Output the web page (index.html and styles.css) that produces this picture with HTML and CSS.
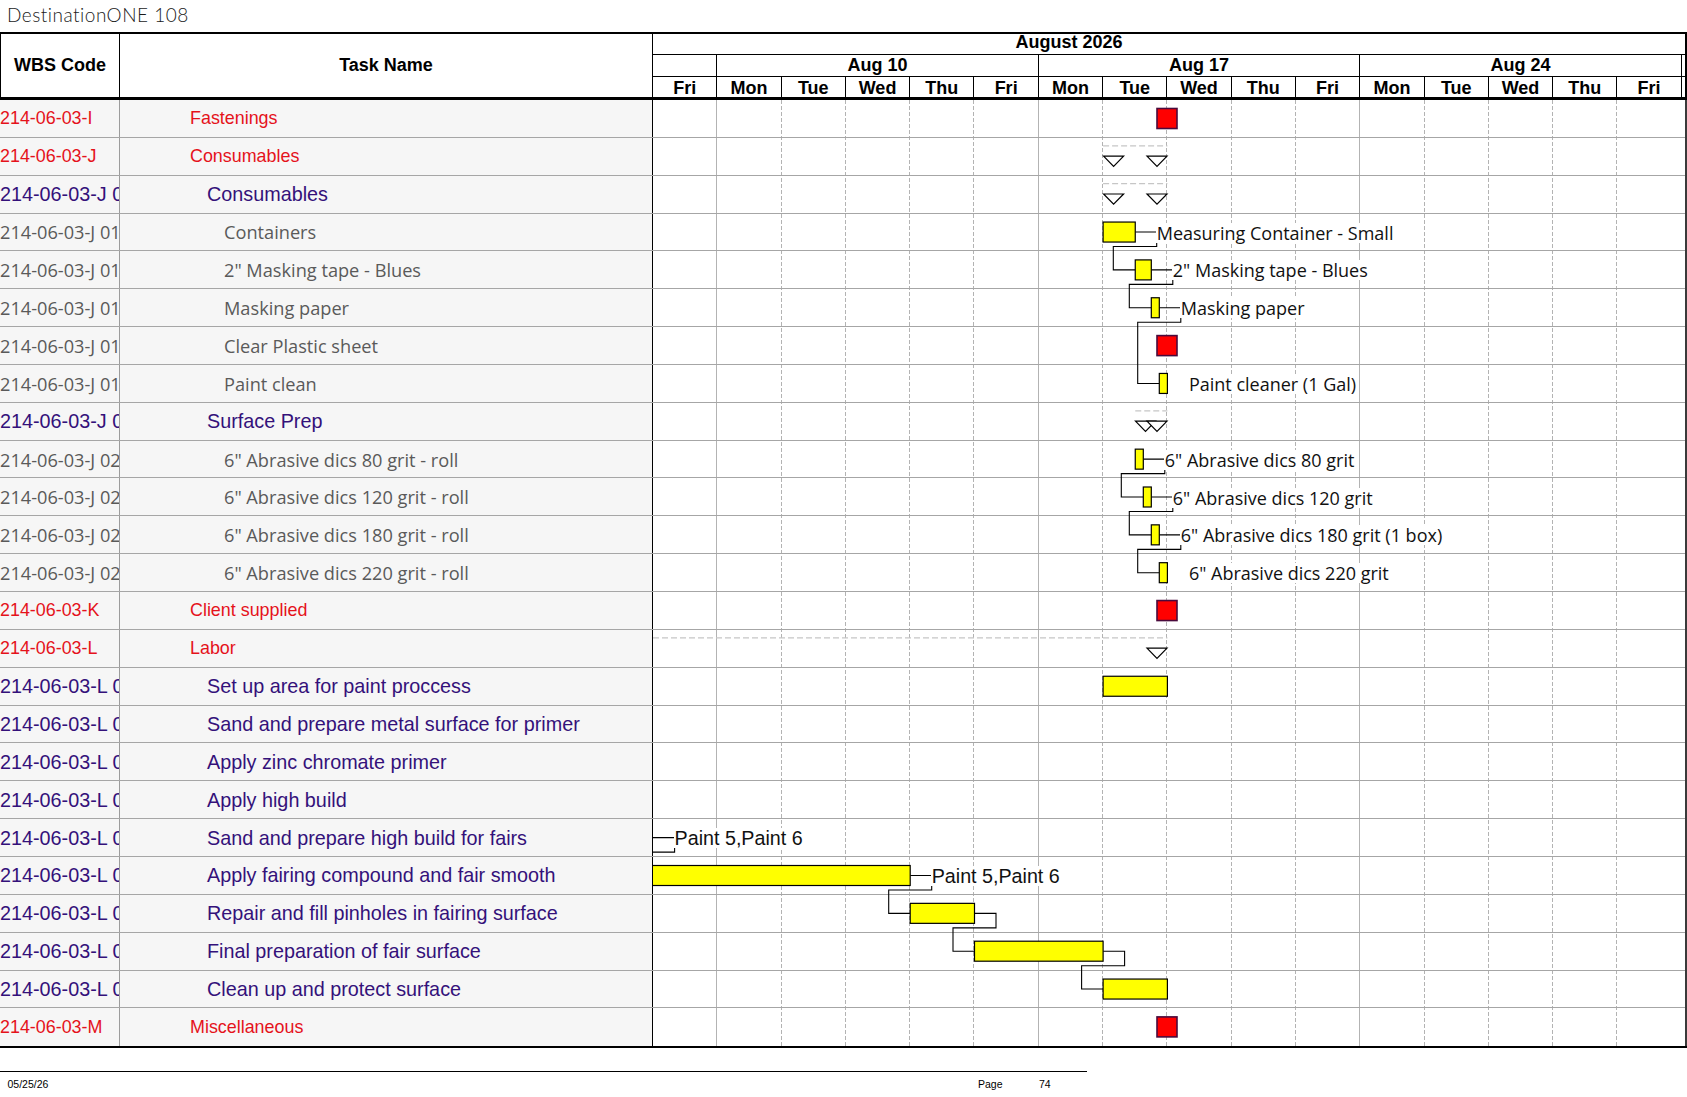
FILE: index.html
```html
<!DOCTYPE html>
<html lang="en">
<head>
<meta charset="utf-8">
<title>DestinationONE 108</title>
<link rel="stylesheet" href="styles.css">
</head>
<body>
<div class="title">DestinationONE 108</div>
<div class="sheet">
  <div class="head">
    <div class="h-wbs">WBS Code</div>
    <div class="h-task">Task Name</div>
    <div class="h-chart">
      <div class="h-month"><span class="month-label">August 2026</span></div>
      <div class="h-weeks">
        <div class="wk wk-lead"></div>
        <div class="wk wk-span">Aug 10</div>
        <div class="wk wk-span">Aug 17</div>
        <div class="wk wk-span">Aug 24</div>
        <div class="wk-tail"></div>
      </div>
      <div class="h-days">
        <div class="day">Fri</div>
        <div class="day">Mon</div>
        <div class="day">Tue</div>
        <div class="day">Wed</div>
        <div class="day">Thu</div>
        <div class="day">Fri</div>
        <div class="day">Mon</div>
        <div class="day">Tue</div>
        <div class="day">Wed</div>
        <div class="day">Thu</div>
        <div class="day">Fri</div>
        <div class="day">Mon</div>
        <div class="day">Tue</div>
        <div class="day">Wed</div>
        <div class="day">Thu</div>
        <div class="day">Fri</div>
        <div class="wk-tail"></div>
      </div>
    </div>
  </div>

  <div class="body">
    <div class="left">
      <div class="row lv1"><div class="wbs">214-06-03-I</div><div class="task">Fastenings</div></div>
      <div class="row lv1"><div class="wbs">214-06-03-J</div><div class="task">Consumables</div></div>
      <div class="row lv2"><div class="wbs">214-06-03-J 01</div><div class="task">Consumables</div></div>
      <div class="row lv3"><div class="wbs">214-06-03-J 0101</div><div class="task">Containers</div></div>
      <div class="row lv3"><div class="wbs">214-06-03-J 0102</div><div class="task">2" Masking tape - Blues</div></div>
      <div class="row lv3"><div class="wbs">214-06-03-J 0103</div><div class="task">Masking paper</div></div>
      <div class="row lv3"><div class="wbs">214-06-03-J 0104</div><div class="task">Clear Plastic sheet</div></div>
      <div class="row lv3"><div class="wbs">214-06-03-J 0105</div><div class="task">Paint clean</div></div>
      <div class="row lv2"><div class="wbs">214-06-03-J 02</div><div class="task">Surface Prep</div></div>
      <div class="row lv3"><div class="wbs">214-06-03-J 0201</div><div class="task">6" Abrasive dics 80 grit - roll</div></div>
      <div class="row lv3"><div class="wbs">214-06-03-J 0202</div><div class="task">6" Abrasive dics 120 grit - roll</div></div>
      <div class="row lv3"><div class="wbs">214-06-03-J 0203</div><div class="task">6" Abrasive dics 180 grit - roll</div></div>
      <div class="row lv3"><div class="wbs">214-06-03-J 0204</div><div class="task">6" Abrasive dics 220 grit - roll</div></div>
      <div class="row lv1"><div class="wbs">214-06-03-K</div><div class="task">Client supplied</div></div>
      <div class="row lv1"><div class="wbs">214-06-03-L</div><div class="task">Labor</div></div>
      <div class="row lv2"><div class="wbs">214-06-03-L 01</div><div class="task">Set up area for paint proccess</div></div>
      <div class="row lv2"><div class="wbs">214-06-03-L 02</div><div class="task">Sand and prepare metal surface for primer</div></div>
      <div class="row lv2"><div class="wbs">214-06-03-L 03</div><div class="task">Apply zinc chromate primer</div></div>
      <div class="row lv2"><div class="wbs">214-06-03-L 04</div><div class="task">Apply high build</div></div>
      <div class="row lv2"><div class="wbs">214-06-03-L 05</div><div class="task">Sand and prepare high build for fairs</div></div>
      <div class="row lv2"><div class="wbs">214-06-03-L 06</div><div class="task">Apply fairing compound and fair smooth</div></div>
      <div class="row lv2"><div class="wbs">214-06-03-L 07</div><div class="task">Repair and fill pinholes in fairing surface</div></div>
      <div class="row lv2"><div class="wbs">214-06-03-L 08</div><div class="task">Final preparation of fair surface</div></div>
      <div class="row lv2"><div class="wbs">214-06-03-L 09</div><div class="task">Clean up and protect surface</div></div>
      <div class="row lv1"><div class="wbs">214-06-03-M</div><div class="task">Miscellaneous</div></div>
    </div>

    <div class="chart">
      <div class="cols">
        <div class="col to-mon"></div>
        <div class="col"></div>
        <div class="col"></div>
        <div class="col"></div>
        <div class="col"></div>
        <div class="col to-mon"></div>
        <div class="col"></div>
        <div class="col"></div>
        <div class="col"></div>
        <div class="col"></div>
        <div class="col to-mon"></div>
        <div class="col"></div>
        <div class="col"></div>
        <div class="col"></div>
        <div class="col"></div>
        <div class="col last"></div>
      </div>
      <div class="hlines">
        <div></div><div></div><div></div><div></div><div></div>
        <div></div><div></div><div></div><div></div><div></div>
        <div></div><div></div><div></div><div></div><div></div>
        <div></div><div></div><div></div><div></div><div></div>
        <div></div><div></div><div></div><div></div><div></div>
      </div>
      <svg class="overlay" width="1032" height="947" viewBox="0 0 1032 947">
        <!-- row 0: Fastenings -->
        <g transform="translate(0 0)">
          <rect class="ms" x="504" y="8.5" width="20" height="20"/>
        </g>
        <!-- row 1: Consumables (summary) -->
        <g transform="translate(0 37.85)">
          <path class="sum" d="M450.1 8 H514.4"/>
          <polygon class="tri" points="450.6,18.3 470.6,18.3 460.6,28.5"/>
          <polygon class="tri" points="494,18.3 514,18.3 504,28.5"/>
        </g>
        <!-- row 2: Consumables (summary) -->
        <g transform="translate(0 75.7)">
          <path class="sum" d="M450.1 8 H514.4"/>
          <polygon class="tri" points="450.6,18.3 470.6,18.3 460.6,28.5"/>
          <polygon class="tri" points="494,18.3 514,18.3 504,28.5"/>
        </g>
        <!-- row 3: Containers -->
        <g transform="translate(0 113.55)">
          <path class="lnk" d="M482.25 18.5 H503.7 V33 H460.3 V56.35 H482.25"/>
          <rect class="bar" x="450.1" y="8.5" width="32.15" height="20"/>
        </g>
        <!-- row 4: Masking tape -->
        <g transform="translate(0 151.4)">
          <path class="lnk" d="M498.3 18.5 H519.8 V33 H476.3 V56.35 H498.3"/>
          <rect class="bar" x="482.25" y="8.5" width="16.05" height="20"/>
        </g>
        <!-- row 5: Masking paper -->
        <g transform="translate(0 189.25)">
          <path class="lnk" d="M506.3 18.5 H527.8 V33 H484.7 V94.2 H506.3"/>
          <rect class="bar" x="498.3" y="8.5" width="8" height="20"/>
        </g>
        <!-- row 6: Clear Plastic sheet -->
        <g transform="translate(0 227.1)">
          <rect class="ms" x="504" y="8.5" width="20" height="20"/>
        </g>
        <!-- row 7: Paint clean -->
        <g transform="translate(0 264.95)">
          <rect class="bar" x="506.3" y="8.5" width="8.1" height="20"/>
        </g>
        <!-- row 8: Surface Prep (summary) -->
        <g transform="translate(0 302.8)">
          <path class="sum" d="M482.25 8 H514.4"/>
          <polygon class="tri" points="482.5,18.3 502.5,18.3 492.5,28.5"/>
          <polygon class="tri" points="494,18.3 514,18.3 504,28.5"/>
        </g>
        <!-- row 9: 80 grit -->
        <g transform="translate(0 340.65)">
          <path class="lnk" d="M490.3 18.5 H511.8 V33 H468.3 V56.35 H490.3"/>
          <rect class="bar" x="482.25" y="8.5" width="8.05" height="20"/>
        </g>
        <!-- row 10: 120 grit -->
        <g transform="translate(0 378.5)">
          <path class="lnk" d="M498.3 18.5 H519.8 V33 H476.3 V56.35 H498.3"/>
          <rect class="bar" x="490.3" y="8.5" width="8" height="20"/>
        </g>
        <!-- row 11: 180 grit -->
        <g transform="translate(0 416.35)">
          <path class="lnk" d="M506.3 18.5 H527.8 V33 H484.7 V56.35 H506.3"/>
          <rect class="bar" x="498.3" y="8.5" width="8" height="20"/>
        </g>
        <!-- row 12: 220 grit -->
        <g transform="translate(0 454.2)">
          <rect class="bar" x="506.3" y="8.5" width="8.1" height="20"/>
        </g>
        <!-- row 13: Client supplied -->
        <g transform="translate(0 492.05)">
          <rect class="ms" x="504" y="8.5" width="20" height="20"/>
        </g>
        <!-- row 14: Labor (summary) -->
        <g transform="translate(0 529.9)">
          <path class="sum" d="M0 8 H514.4"/>
          <polygon class="tri" points="494,18.3 514,18.3 504,28.5"/>
        </g>
        <!-- row 15: Set up area -->
        <g transform="translate(0 567.75)">
          <rect class="bar" x="450.1" y="8.5" width="64.3" height="20"/>
        </g>
        <!-- row 19: Sand and prepare high build -->
        <g transform="translate(0 719.15)">
          <path class="lnk" d="M0 18.5 H21.6 V33 H0"/>
        </g>
        <!-- row 20: Apply fairing compound -->
        <g transform="translate(0 757)">
          <path class="lnk" d="M257.2 18.5 H278.7 V33 H235.7 V56.35 H257.2"/>
          <rect class="bar" x="-5" y="8.5" width="262.2" height="20"/>
        </g>
        <!-- row 21: Repair and fill pinholes -->
        <g transform="translate(0 794.85)">
          <path class="lnk" d="M321.5 18.5 H343 V33 H300 V56.35 H321.5"/>
          <rect class="bar" x="257.2" y="8.5" width="64.3" height="20"/>
        </g>
        <!-- row 22: Final preparation -->
        <g transform="translate(0 832.7)">
          <path class="lnk" d="M450.1 18.5 H471.6 V33 H428.6 V56.35 H450.1"/>
          <rect class="bar" x="321.5" y="8.5" width="128.6" height="20"/>
        </g>
        <!-- row 23: Clean up -->
        <g transform="translate(0 870.55)">
          <rect class="bar" x="450.1" y="8.5" width="64.3" height="20"/>
        </g>
        <!-- row 24: Miscellaneous -->
        <g transform="translate(0 908.4)">
          <rect class="ms" x="504" y="8.5" width="20" height="20"/>
        </g>
      </svg>
      <div class="lbl" style="left:502.7px;top:122.55px">Measuring Container - Small</div>
      <div class="lbl" style="left:518.8px;top:160.4px">2" Masking tape - Blues</div>
      <div class="lbl" style="left:526.8px;top:198.25px">Masking paper</div>
      <div class="lbl" style="left:534.9px;top:273.95px">Paint cleaner (1 Gal)</div>
      <div class="lbl" style="left:510.8px;top:349.65px">6" Abrasive dics 80 grit</div>
      <div class="lbl" style="left:518.8px;top:387.5px">6" Abrasive dics 120 grit</div>
      <div class="lbl" style="left:526.8px;top:425.35px">6" Abrasive dics 180 grit (1 box)</div>
      <div class="lbl" style="left:534.9px;top:463.2px">6" Abrasive dics 220 grit</div>
      <div class="lbl lbl-res" style="left:20.6px;top:728.15px">Paint 5,Paint 6</div>
      <div class="lbl lbl-res" style="left:277.7px;top:766px">Paint 5,Paint 6</div>
    </div>
  </div>
</div>
<div class="footer">
  <div class="foot-row">
    <div class="foot-date">05/25/26</div>
    <div class="foot-page">Page</div>
    <div class="foot-num">74</div>
  </div>
</div>
</body>
</html>
```

FILE: styles.css
```css
* { box-sizing: border-box; }
html, body { margin: 0; padding: 0; background: #fff; }
body {
  width: 1687px;
  height: 1097px;
  overflow: hidden;
  font-family: "Liberation Sans", Arial, sans-serif;
  color: #000;
}

.title {
  height: 32px;
  padding: 3px 0 0 7px;
  font-family: Lato, "Open Sans", sans-serif;
  font-weight: 300;
  font-size: 19px;
  line-height: 24px;
  letter-spacing: 0.5px;
  color: #1a1a1a;
}

.sheet { width: 1687px; border-top: 2px solid #000; }

/* ---------- header ---------- */
.head {
  display: flex;
  height: 66px;
  border-bottom: 3px solid #000;
  font-weight: bold;
  font-size: 18px;
}
.h-wbs {
  width: 120px;
  border-left: 1px solid #000;
  border-right: 1px solid #000;
  display: flex;
  align-items: center;
  justify-content: center;
}
.h-task {
  width: 533px;
  border-right: 1px solid #000;
  display: flex;
  align-items: center;
  justify-content: center;
}
.h-chart {
  width: 1034px;
  border-right: 2px solid #000;
  display: flex;
  flex-direction: column;
}
.h-month {
  height: 21px;
  border-bottom: 1px solid #000;
  line-height: 17px;
  white-space: nowrap;
}
.month-label { display: block; width: 832px; text-align: center; }
.h-weeks {
  height: 22px;
  border-bottom: 1px solid #000;
  display: flex;
  line-height: 21px;
}
.wk { border-right: 1px solid #000; text-align: center; white-space: nowrap; }
.wk-lead { width: 64.3px; flex: 0 0 64.3px; }
.wk-span { width: 321.5px; flex: 0 0 321.5px; }
.wk-tail { flex: 1 1 auto; }
.h-days { height: 20px; display: flex; }
.day {
  width: 64.3px;
  flex: 0 0 64.3px;
  border-right: 1px solid #000;
  text-align: center;
  padding-top: 3px;
  line-height: 17px;
}

/* ---------- body ---------- */
.body {
  display: flex;
  height: 948.25px;
  border-bottom: 2px solid #000;
}
.left {
  width: 653px;
  height: 946.25px;
  display: grid;
  grid-template-rows: repeat(25, 1fr);
  background: #f6f6f6;
}
.row {
  display: grid;
  grid-template-columns: 120px 533px;
  border-bottom: 1px solid #a6a6a6;
  min-height: 0;
}
.row:last-child { border-bottom: none; }
.wbs {
  border-right: 1px solid #9c9c9c;
  overflow: hidden;
  white-space: nowrap;
  display: flex;
  align-items: center;
  padding-top: 1px;
}
.task {
  border-right: 1px solid #000;
  overflow: hidden;
  white-space: nowrap;
  display: flex;
  align-items: center;
  padding-top: 1px;
}
.lv1 { color: #e5121b; font-size: 17.9px; }
.lv1 .task { padding-left: 70px; }
.lv2 { color: #34117a; font-size: 19.8px; }
.lv2 .task { padding-left: 87px; }
.lv3 { color: #5a5a5a; font-family: "Open Sans", sans-serif; font-size: 18.2px; }
.lv3 .task { padding-left: 104px; }

/* ---------- chart ---------- */
.chart {
  position: relative;
  width: 1034px;
  height: 946.25px;
  border-right: 2px solid #3a3a3a;
  background: #fff;
  overflow: hidden;
}
.cols {
  position: absolute;
  inset: 0;
  display: flex;
}
.col {
  flex: 0 0 64.3px;
  background-image: linear-gradient(#b3b3b3 4px, transparent 4px);
  background-size: 1px 6px;
  background-repeat: repeat-y;
  background-position: right top;
}
.col.to-mon {
  background-image: linear-gradient(#b3b3b3, #b3b3b3);
  background-size: 1px 100%;
  background-repeat: no-repeat;
}
.col.last { background: none; }
.hlines {
  position: absolute;
  inset: 0;
  display: grid;
  grid-template-rows: repeat(25, 1fr);
}
.hlines div { border-bottom: 1px solid #a6a6a6; }
.hlines div:last-child { border-bottom: none; }

.overlay { position: absolute; left: 0; top: 0; overflow: hidden; }
.sum { fill: none; stroke: #c6c6c6; stroke-width: 1.3; stroke-dasharray: 6 3; }
.lnk { fill: none; stroke: #000; stroke-width: 1.1; }
.bar { fill: #ffff00; stroke: #000; stroke-width: 1.2; }
.ms { fill: #ff0000; stroke: #4a0a3c; stroke-width: 1.6; }
.tri { fill: #fff; stroke: #000; stroke-width: 1.2; }

.lbl {
  position: absolute;
  height: 20px;
  line-height: 20px;
  padding-left: 1px;
  background: #fff;
  white-space: nowrap;
  font-family: "Open Sans", sans-serif;
  font-size: 18px;
  color: #111;
}
.lbl-res { font-family: "Liberation Sans", Arial, sans-serif; font-size: 19.7px; }

/* ---------- footer ---------- */
.footer {
  margin-top: 23px;
  width: 1087px;
  border-top: 1px solid #000;
}
.foot-row {
  display: grid;
  grid-template-columns: 978px 61px auto;
  padding-top: 6px;
  font-size: 10.5px;
  line-height: 12px;
}
.foot-date { padding-left: 7.5px; }
```
